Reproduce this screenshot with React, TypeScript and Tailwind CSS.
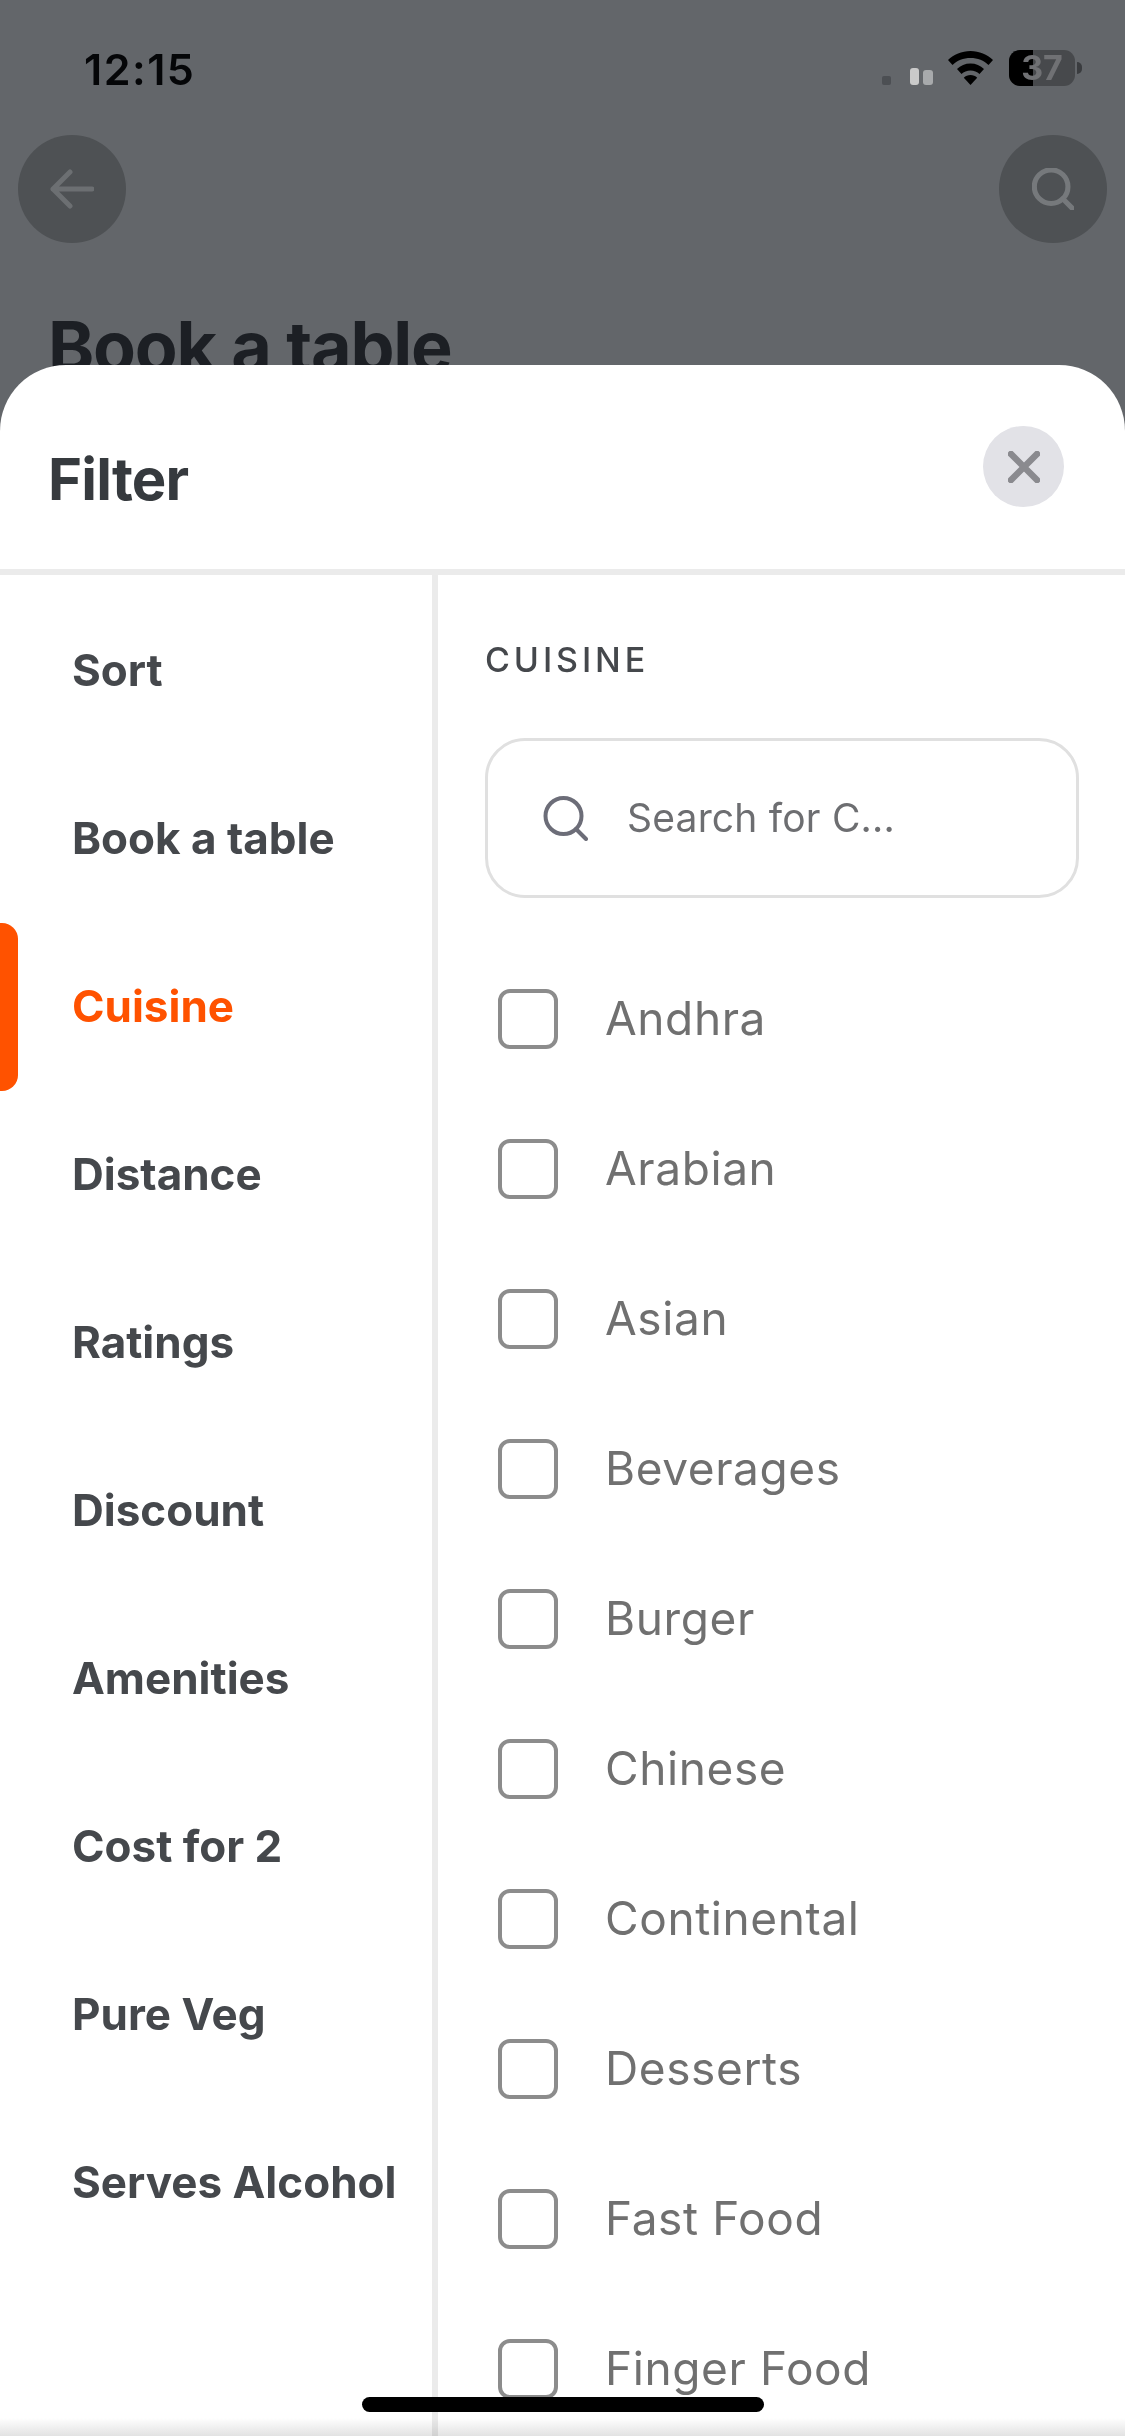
const filters = ["Sort", "Book a table", "Cuisine", "Distance", "Ratings", "Discount", "Amenities", "Cost for 2", "Pure Veg", "Serves Alcohol"];

const cuisines = ["Andhra", "Arabian", "Asian", "Beverages", "Burger", "Chinese", "Continental", "Desserts", "Fast Food", "Finger Food"];

function SearchIcon({ className, stroke = 4 }: { className: string; stroke?: number }) {
  return (
    <svg viewBox="0 0 45 45" fill="none" stroke="currentColor" strokeLinecap="round" className={className}>
      <circle cx="20.5" cy="20" r="18" strokeWidth={stroke} />
      <path d="M33 33l10 10" strokeWidth={stroke} />
    </svg>
  );
}

function StatusBar() {
  return (
    <div className="flex h-[135px] items-start justify-between pl-[84px] pr-[43px] pt-[46px]">
      <span className="text-[43px] font-semibold leading-[46px] tracking-[1.5px] text-[#050608] font-['Inter',sans-serif]">12:15</span>
      <div className="flex items-center pt-[4px]">
        <div className="mt-[25px] h-[9px] w-[9px] rounded-[2px] bg-[#4c4f53]" />
        <div className="ml-[19px] mt-[17px] h-[17px] w-[9px] rounded-[3px] bg-[#cacaca]" />
        <div className="ml-[4px] mt-[19px] h-[15px] w-[10px] rounded-[3px] bg-[#a8aaac]" />
        <svg viewBox="0 0 45 34" className="ml-[15px] h-[34px] w-[45px]" fill="#000">
          <path d="M22.500 0C13.600 0 5.800 3.500 0 9l4.500 5C9 9.600 15.400 7 22.500 7s13.500 2.600 18 7L45 9C39.200 3.500 31.400 0 22.500 0z" />
          <path d="M22.500 12.500c-5.300 0-10 2-13.500 5.500l4.500 5c2.300-2.300 5.500-3.500 9-3.500s6.700 1.200 9 3.500l4.500-5c-3.500-3.500-8.200-5.500-13.500-5.500z" />
          <path d="M22.500 24c-2.600 0-5 .9-6.700 2.700l6.700 7.300 6.700-7.300C27.500 24.900 25.100 24 22.500 24z" />
        </svg>
        <div className="relative ml-[16px] flex h-[36px] w-[66px] rounded-[11px] bg-[#47494c]">
          <div className="h-full w-[24px] rounded-l-[11px] bg-black" />
          <span className="absolute inset-0 text-center text-[34px] font-bold leading-[36px] text-[#707174] font-['Inter',sans-serif]">37</span>
        </div>
        <div className="ml-[2px] h-[12px] w-[5px] rounded-r-full bg-[#3a3c3f]" />
      </div>
    </div>
  );
}

function Backdrop() {
  return (
    <div className="h-full bg-[#63666a]">
      <StatusBar />
      <div className="flex items-center justify-between pl-[18px] pr-[18px]">
        <div className="flex h-[108px] w-[108px] items-center justify-center rounded-full bg-[#4e5154]">
          <svg viewBox="0 0 44 40" fill="none" stroke="#6c6f72" strokeWidth="5" strokeLinecap="round" strokeLinejoin="round" className="h-[40px] w-[44px]">
            <path d="M42 20H3M20 3L3 20l17 17" />
          </svg>
        </div>
        <div className="flex h-[108px] w-[108px] items-center justify-center rounded-full bg-[#4e5154]">
          <SearchIcon className="h-[42px] w-[42px] text-[#76797c]" stroke={5.5} />
        </div>
      </div>
      <h1 className="mt-[64px] pl-[48px] text-[70px] font-bold leading-[80px] tracking-[-1.2px] text-[#1c1f24] font-['Inter',sans-serif]">Book a table</h1>
    </div>
  );
}

function FilterSheet() {
  return (
    <div className="absolute inset-x-0 bottom-0 top-[365px] flex flex-col overflow-hidden rounded-t-[66px] bg-white font-['Inter',sans-serif]">
      <div className="flex h-[210px] shrink-0 items-start justify-between border-b-[6px] border-[#ebebeb] pl-[48px] pr-[61px] pt-[61px]">
        <h2 className="mt-[13px] text-[58px] font-bold leading-[80px] tracking-[-0.8px] text-[#363a3e]">Filter</h2>
        <button className="flex h-[81px] w-[81px] items-center justify-center rounded-full bg-[#e2e2e7]">
          <svg viewBox="0 0 32 32" fill="none" stroke="#8a8a8f" strokeWidth="6.5" strokeLinecap="round" className="h-[32px] w-[32px]">
            <path d="M3 3l26 26M29 3L3 29" />
          </svg>
        </button>
      </div>
      <div className="flex min-h-0 flex-1">
        <div className="w-[438px] shrink-0 border-r-[6px] border-[#ebebeb] pt-[12px]">
          {filters.map((name) => (
            <div key={name} className="relative flex h-[168px] items-center pl-[72px]">
              {name === "Cuisine" && <div className="absolute inset-y-0 left-0 w-[18px] rounded-r-[16px] bg-[#ff5200]" />}
              <span className={`mt-[-3px] text-[44px] font-bold leading-[56px] ${name === "Cuisine" ? "text-[#ff5200]" : "text-[#45484c]"}`}>{name}</span>
            </div>
          ))}
        </div>
        <div className="min-w-0 flex-1 pl-[47px] pr-[46px] pt-[65px]">
          <div className="text-[34px] font-medium leading-[40px] tracking-[3.9px] text-[#45484c]">CUISINE</div>
          <div className="mt-[58px] flex h-[160px] items-center rounded-[40px] border-[3px] border-[#e0e0e0] pl-[55px]">
            <SearchIcon className="h-[45px] w-[45px] shrink-0 text-[#6c6d78]" />
            <span className="ml-[39px] text-[39px] leading-[50px] tracking-[0.2px] text-[#6d6e71]">Search for C...</span>
          </div>
          <div className="mt-[46px]">
            {cuisines.map((name) => (
              <div key={name} className="flex h-[150px] items-center pl-[13px]">
                <div className="h-[60px] w-[60px] shrink-0 rounded-[12px] border-[4px] border-[#8c8c8c]" />
                <span className="ml-[47px] mt-[-2px] text-[46px] leading-[56px] tracking-[0.6px] text-[#707070]">{name}</span>
              </div>
            ))}
          </div>
        </div>
      </div>
    </div>
  );
}

export default function App() {
  return (
    <div className="relative h-[2436px] w-[1125px] overflow-hidden bg-white">
      <Backdrop />
      <FilterSheet />
      <div className="absolute inset-x-0 bottom-0 h-[18px] bg-gradient-to-b from-white to-[#e2e2e2] mix-blend-multiply" />
      <div className="absolute bottom-[24px] left-[362px] h-[15px] w-[402px] rounded-full bg-black" />
    </div>
  );
}
